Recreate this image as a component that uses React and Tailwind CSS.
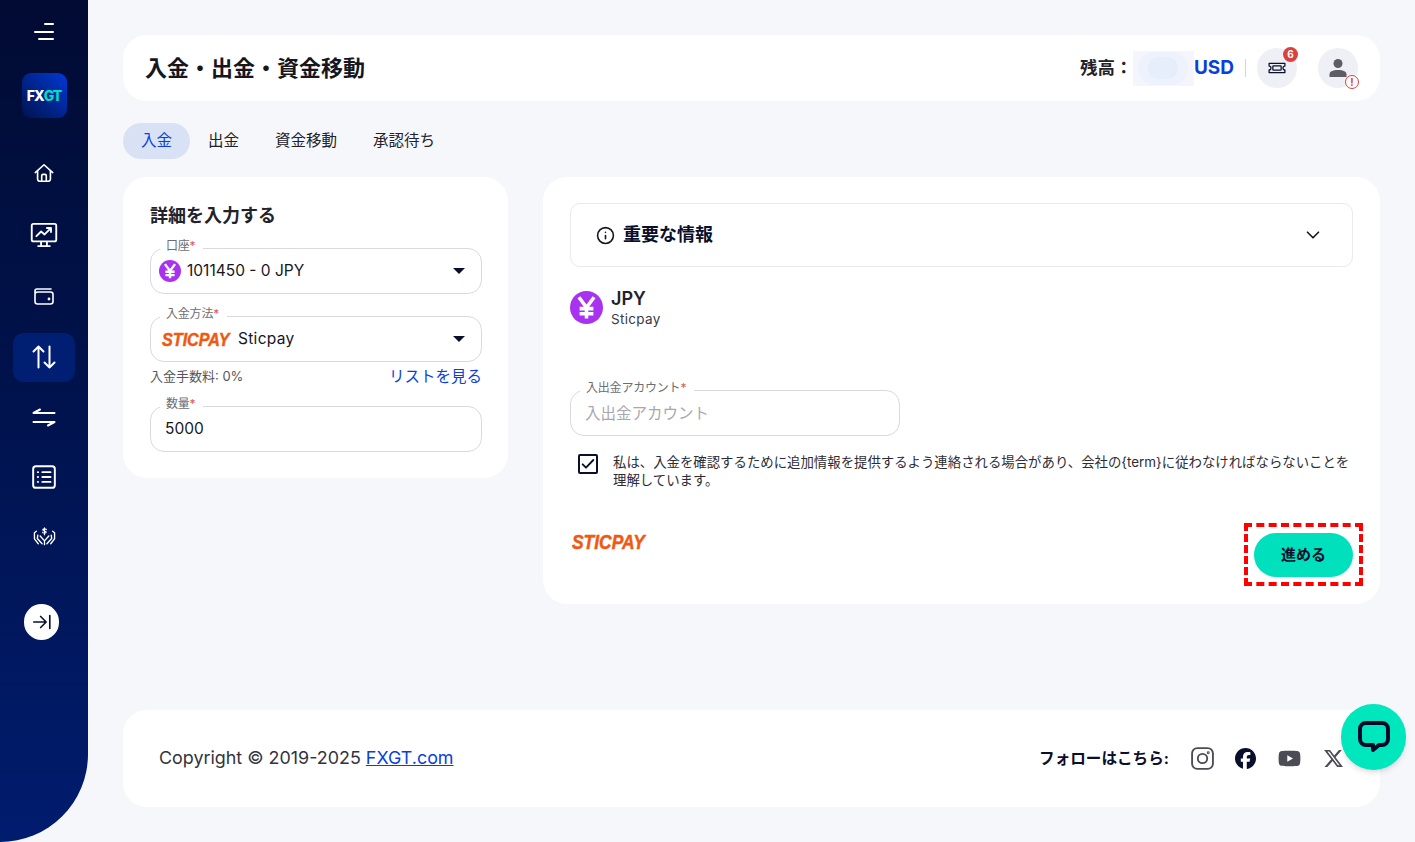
import React from "react";
import { FaFacebook, FaYoutube, FaXTwitter } from "react-icons/fa6";
import { ChevronDown, Info } from "lucide-react";

const FONT = { fontFamily: '"Inter", "Noto Sans CJK JP", sans-serif' };

const Icon = ({ children, size = 24, className = "", sw = 1.8 }) => (
  <svg
    width={size}
    height={size}
    viewBox="0 0 24 24"
    fill="none"
    stroke="currentColor"
    strokeWidth={sw}
    strokeLinecap="round"
    strokeLinejoin="round"
    className={className}
  >
    {children}
  </svg>
);

const TOP_NAV = [
  {
    key: "home",
    icon: (
      <Icon size={22} className="-mt-[2px]">
        <path d="M2.5 11.5 12 3l9.5 8.5" />
        <path d="M5 10v8.5A2.5 2.5 0 0 0 7.5 21h9a2.5 2.5 0 0 0 2.5-2.5V10" />
        <path d="M9.5 21v-6a1.5 1.5 0 0 1 1.5-1.5h2a1.5 1.5 0 0 1 1.5 1.5v6" />
      </Icon>
    ),
  },
  {
    key: "chart",
    icon: (
      <Icon size={28} sw={1.6}>
        <rect x="1.5" y="2.5" width="21" height="15" rx="1.5" />
        <path d="m5.5 13 4-4 3 2.5 5-5" />
        <path d="M14.5 6h3.5v3.5" />
        <path d="M9.5 18v3M14.5 18v3M7 21.5h10" />
      </Icon>
    ),
  },
  {
    key: "wallet",
    icon: (
      <Icon size={24} sw={1.6}>
        <path d="M3 8.5V7a2 2 0 0 1 2-2h14" />
        <rect x="3" y="8" width="18" height="12" rx="2.5" />
        <circle cx="17" cy="15" r="0.6" />
      </Icon>
    ),
  },
  {
    key: "transfer",
    active: true,
    icon: (
      <Icon size={24} sw={2}>
        <path d="M6.5 22.500V1.500M1.500 6.500l5-5 5 5" />
        <path d="M17.500 1.500v21M12.500 17.500l5 5 5-5" />
      </Icon>
    ),
  },
];

const BOTTOM_NAV = [
  {
    key: "exchange",
    icon: (
      <Icon size={24} sw={2}>
        <path d="M22.500 8H1.500L8 4.500" />
        <path d="M1.500 17h21L16 20.500" />
      </Icon>
    ),
  },
  {
    key: "list",
    icon: (
      <Icon size={26} sw={1.8}>
        <rect x="2" y="2" width="20" height="20" rx="2.5" />
        <path d="M10.500 7.500H18M10.500 12H18M10.500 16.500H18" />
        <path d="M6.300 7.500h.2M6.300 12h.2M6.300 16.500h.2" />
      </Icon>
    ),
  },
  {
    key: "hands",
    icon: (
      <Icon size={23} sw={1.400}>
        <path d="M3.500 5.500 1.500 7v6.500l4 5" />
        <path d="M20.500 5.500 22.500 7v6.500l-4 5" />
        <path d="M5 9.500 4.500 13l5 5.500" />
        <path d="m19 9.500.5 3.500-5 5.500" />
        <path d="m7.500 10.500 4.500 5 4.500-5M12 15.500v4" />
        <path d="M14 3.800c-.4-1-3.600-1.200-3.800.2-.2 1.500 3.800 1 3.600 2.500-.2 1.300-3.200 1.200-3.800.1M12 2v7" strokeWidth="1.200" />
      </Icon>
    ),
  },
];

const Yen = ({ size }) => (
  <span
    className="flex shrink-0 items-center justify-center rounded-full bg-[#a832f0] text-white"
    style={{ width: size, height: size }}
  >
    <svg width={size} height={size} viewBox="0 0 24 24" fill="none" stroke="currentColor" strokeWidth="2.600">
      <path d="m6.500 4.500 5.500 7.500 5.500-7.500M12 12v8M7 12.800h10M7 16.500h10" />
    </svg>
  </span>
);

const Sticpay = ({ className = "", width }) => (
  <span className={`inline-block shrink-0 ${className}`} style={{ width }}>
    <span
      className="inline-block origin-left scale-x-[0.85] whitespace-nowrap font-bold italic text-[#ee5a12] [-webkit-text-stroke:0.5px_#ee5a12]"
      style={{ fontFamily: '"Liberation Sans", sans-serif' }}
    >
      STICPAY
    </span>
  </span>
);

const Caret = () => (
  <span className="h-0 w-0 border-x-[6px] border-t-[6px] border-x-transparent border-t-[#0a0f2c]" />
);

const Field = ({ label, className = "", children }) => (
  <div
    className={`relative flex h-[46px] items-center rounded-[14px] border border-[#d9d9de] bg-white ${className}`}
  >
    <span className="absolute -top-[12px] left-[9px] flex h-[18px] items-center whitespace-nowrap bg-white pl-[6px] pr-[8px] text-[12px] tracking-[-0.2px] text-[#6d6d74]">
      {label}
      <span className="text-[#e0574f]">*</span>
    </span>
    {children}
  </div>
);

const NavItem = ({ item }) => (
  <div
    className={`flex h-[49px] w-[62px] items-center justify-center rounded-[11px] text-white ${
      item.active ? "bg-[#001e72]" : ""
    }`}
  >
    {item.icon}
  </div>
);

const Sidebar = () => (
  <aside className="flex h-[842px] w-[88px] shrink-0 flex-col items-center rounded-br-[88px] bg-gradient-to-b from-[#010b33] via-[#00134f] to-[#001c6e]">
    <div className="mt-[23px] flex h-[17px] w-[20px] flex-col items-end justify-between">
      <span className="h-[2px] w-[10px] rounded bg-white" />
      <span className="h-[2px] w-[20px] rounded bg-white" />
      <span className="h-[2px] w-[16px] rounded bg-white" />
    </div>
    <div className="mt-[33px] flex h-[45px] w-[45px] items-center justify-center rounded-[9px] bg-gradient-to-bl from-[#0239d8] to-[#00134f] text-[14px] font-extrabold tracking-[-1px]">
      <span className="text-white">FX</span>
      <span className="text-[#00e0bd]">GT</span>
    </div>
    <nav className="mt-[31px] flex flex-col gap-[12.3px]">
      {TOP_NAV.map((item) => (
        <NavItem key={item.key} item={item} />
      ))}
    </nav>
    <nav className="mt-[11px] flex flex-col gap-[11px]">
      {BOTTOM_NAV.map((item) => (
        <NavItem key={item.key} item={item} />
      ))}
    </nav>
    <button className="mr-[5px] mt-[42px] flex h-[36px] w-[35px] items-center justify-center rounded-full bg-white text-[#0a0f2c]">
      <Icon size={22} sw={1.8}>
        <path d="M3 12h13M10.500 6l6 6-6 6M20.500 5v14" />
      </Icon>
    </button>
  </aside>
);

const Header = () => (
  <header className="flex h-[66px] items-center justify-between rounded-[24px] bg-white pl-[22px] pr-[22px]">
    <h1 className="text-[22px] font-bold text-[#16161d]">入金・出金・資金移動</h1>
    <div className="flex items-center">
      <span className="w-[53px] whitespace-nowrap text-[17.500px] font-bold text-[#22222a]">残高：</span>
      <span className="flex h-[35px] w-[61px] items-center justify-center bg-[#f5f6fb]">
        <span className="flex h-[33px] w-[50px] items-center justify-center rounded-full bg-[#edf2fd]">
          <span className="h-[22px] w-[30px] rounded-full bg-[#e6edfb]" />
        </span>
      </span>
      <span className="text-[19px] font-bold text-[#0a3fdc]">USD</span>
      <span className="ml-[11px] h-[18px] w-px bg-[#d5d5da]" />
      <span className="relative ml-[11px] flex h-[40px] w-[40px] items-center justify-center rounded-full bg-[#eef0f5] text-[#0a0f2c]">
        <Icon size={20} sw={1.500}>
          <path d="M2.500 6.500h19v3.200a2.300 2.300 0 0 0 0 4.600v3.200h-19v-3.200a2.300 2.300 0 0 0 0-4.600V6.500Z" />
          <rect x="7" y="9.500" width="10" height="5" rx="0.800" />
        </Icon>
        <span className="absolute -right-[1px] -top-[1px] flex h-[15px] w-[15px] items-center justify-center rounded-full bg-[#d9403f] text-[10px] font-bold text-white">
          6
        </span>
      </span>
      <span className="relative ml-[21px] flex h-[40px] w-[40px] items-center justify-center rounded-full bg-[#eef0f5] text-[#5c5d66]">
        <svg width="24" height="24" viewBox="0 0 24 24" fill="currentColor">
          <circle cx="12" cy="7.500" r="4.500" />
          <path d="M3.500 21v-2.500c0-3 3-4.500 8.500-4.500s8.500 1.500 8.500 4.500V21Z" />
        </svg>
        <span className="absolute -bottom-[1px] -right-[1px] flex h-[14px] w-[14px] items-center justify-center rounded-full border border-[#d9403f] bg-white text-[10px] font-bold leading-none text-[#d9403f]">
          !
        </span>
      </span>
    </div>
  </header>
);

const Tabs = () => (
  <div className="mt-[22px] flex h-[36px] text-[15.5px] text-[#22222a]">
    <span className="flex items-center rounded-full bg-[#d9e2f5] px-[18px] text-[#0a3fdc]">入金</span>
    {["出金", "資金移動", "承認待ち"].map((tab) => (
      <span key={tab} className="flex items-center px-[18px]">
        {tab}
      </span>
    ))}
  </div>
);

const DetailsCard = () => (
  <section className="h-[301px] w-[385px] shrink-0 rounded-[24px] bg-white pl-[27px] pr-[26px] pt-[28px]">
    <h2 className="text-[18px] font-bold leading-[22px] text-[#22222a]">詳細を入力する</h2>
    <Field label="口座" className="mt-[21px] pl-[8px] pr-[16px]">
      <Yen size={22} />
      <span className="ml-[6px] flex-1 text-[15.5px] text-[#16161d]">1011450 - 0 JPY</span>
      <Caret />
    </Field>
    <Field label="入金方法" className="mt-[22px] pl-[11px] pr-[16px]">
      <Sticpay className="text-[19px] leading-none" width={76} />
      <span className="flex-1 text-[15.5px] tracking-[0.3px] text-[#16161d]">Sticpay</span>
      <Caret />
    </Field>
    <div className="mt-[4px] flex h-[22px] items-center justify-between">
      <span className="text-[13px] text-[#55555c]">入金手数料: 0%</span>
      <a className="text-[15.500px] text-[#0a3fdc]">リストを見る</a>
    </div>
    <Field label="数量" className="mt-[18px] px-[14px]">
      <span className="text-[15.500px] text-[#16161d]">5000</span>
    </Field>
  </section>
);

const PaymentCard = () => (
  <section className="relative h-[427px] flex-1 rounded-[24px] bg-white px-[27px] pt-[26px]">
    <div className="flex h-[64px] items-center rounded-[10px] border border-[#e9e9ee] pl-[25px] pr-[28px]">
      <Info size={19} strokeWidth={2} className="text-[#16161d]" />
      <span className="ml-[8px] flex-1 text-[18px] font-bold leading-[24px] text-[#0a0f2c]">重要な情報</span>
      <ChevronDown size={22} strokeWidth={1.8} className="text-[#16161d]" />
    </div>
    <div className="mt-[20px] flex items-center">
      <Yen size={33} />
      <div className="ml-[8px] pt-[2px]">
        <div className="text-[18px] font-semibold leading-[20px] text-[#22222a]">JPY</div>
        <div className="mt-[1px] text-[13.5px] leading-[18px] tracking-[0.3px] text-[#3a3a42]">Sticpay</div>
      </div>
    </div>
    <Field label="入出金アカウント" className="mt-[62px] w-[330px] px-[14px]">
      <span className="pt-[1px] text-[15.500px] text-[#a8a8ae]">入出金アカウント</span>
    </Field>
    <div className="mt-[17px] flex items-start">
      <span className="ml-[8px] mt-[1px] flex h-[20px] w-[20px] shrink-0 items-center justify-center rounded-[2px] border-2 border-[#0a0f2c] text-[#0a0f2c]">
        <Icon size={16} sw={2.800}>
          <path d="m4 12.500 5 5L20 6" />
        </Icon>
      </span>
      <p className="ml-[15px] whitespace-nowrap text-[13.4px] leading-[18px] text-[#2c2c34]">
        私は、入金を確認するために追加情報を提供するよう連絡される場合があり、会社の{"{term}"}に従わなければならないことを
        <br />
        理解しています。
      </p>
    </div>
    <div className="mt-[27px] flex items-start justify-between">
      <Sticpay className="ml-[2px] mt-[14px] text-[20.500px] leading-[24px]" width={74} />
      <button className="mt-[17px] h-[44px] w-[99px] rounded-full bg-[#00e0bd] text-[15px] font-bold text-[#0a0f2c]">
        進める
      </button>
    </div>
    <div className="absolute left-[701px] top-[346px] h-[63px] w-[119px] border-[4px] border-dashed border-[#ff0000]" />
  </section>
);

const Footer = () => (
  <footer className="mt-[106px] flex h-[97px] items-center justify-between rounded-[24px] bg-white pl-[36px] pr-[36px]">
    <p className="text-[17.9px] text-[#33333b]">
      Copyright © 2019-2025 <a className="text-[#0a3fdc] underline">FXGT.com</a>
    </p>
    <div className="flex items-center">
      <span className="mr-[22px] text-[15.6px] font-bold text-[#0a0f2c]">フォローはこちら:</span>
      <span className="flex w-[22px] justify-center text-[#4b4c56]">
        <Icon size={25} sw={1.800} className="shrink-0">
          <rect x="2" y="2" width="20" height="20" rx="5" />
          <circle cx="12" cy="12" r="4.500" />
          <circle cx="17.500" cy="6.500" r="0.500" />
        </Icon>
      </span>
      <FaFacebook size={21} className="ml-[22px] text-[#0a0f2c]" />
      <FaYoutube size={23} className="ml-[22px] text-[#4b4c56]" />
      <FaXTwitter size={21} className="ml-[22px] text-[#4b4c56]" />
    </div>
  </footer>
);

export default function App() {
  return (
    <div className="relative flex h-[842px] w-[1415px] overflow-hidden bg-[#f6f7fa]" style={FONT}>
      <Sidebar />
      <main className="flex-1 pl-[35px] pr-[35px] pt-[35px]">
        <Header />
        <Tabs />
        <div className="mt-[18px] flex items-start gap-[35px]">
          <DetailsCard />
          <PaymentCard />
        </div>
        <Footer />
      </main>
      <button className="absolute left-[1341px] top-[704px] flex h-[66px] w-[65px] items-center justify-center rounded-full bg-[#00e6bd] shadow-md">
        <svg width="36" height="36" viewBox="0 0 36 36" fill="none" stroke="#050a2c" strokeWidth="4" strokeLinejoin="round">
          <path d="M10 4h16a6 6 0 0 1 6 6v10a6 6 0 0 1-6 6h-3l-6 5v-5h-7a6 6 0 0 1-6-6V10a6 6 0 0 1 6-6Z" />
        </svg>
      </button>
    </div>
  );
}
